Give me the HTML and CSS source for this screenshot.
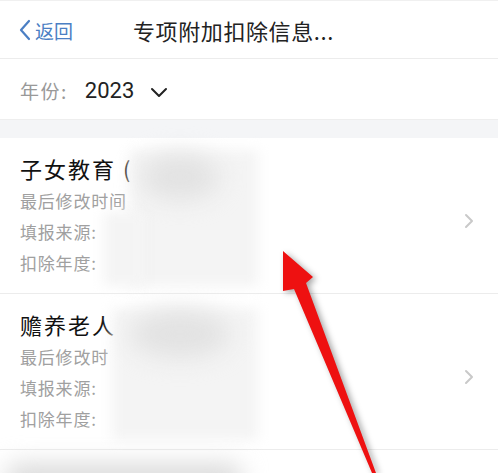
FILE: index.html
```html
<!DOCTYPE html>
<html lang="zh-CN">
  <head>
    <meta charset="UTF-8" />
    <meta name="viewport" content="width=device-width, initial-scale=1.0" />
    <title>专项附加扣除信息</title>
    <link rel="stylesheet" href="styles.css">
  </head>
  <body>
    <div class="page">
      <header class="nav-bar flex align-center">
        <a class="back flex align-center" href="#">
          <svg width="14" height="22" viewBox="0 0 14 22">
            <path d="M11 2 L3 11 L11 20" fill="none" stroke="#4b7fc4" stroke-width="2.2" stroke-linecap="round" stroke-linejoin="round" />
          </svg>
          <span>返回</span>
        </a>
        <h1 class="nav-title">专项附加扣除信息...</h1>
      </header>

      <section class="year-row flex align-center">
        <span class="year-label">年份:</span>
        <span class="year-value">2023</span>
        <svg class="year-caret" width="18" height="12" viewBox="0 0 18 12">
          <path d="M2 3 L9 10 L16 3" fill="none" stroke="#222" stroke-width="2" stroke-linecap="round" stroke-linejoin="round" />
        </svg>
      </section>

      <ul class="items">
        <li class="item flex align-center">
          <div class="item-body">
            <p class="item-title">子女教育 (</p>
            <p class="item-line">最后修改时间</p>
            <p class="item-line">填报来源:</p>
            <p class="item-line">扣除年度:</p>
          </div>
          <svg class="item-arrow" width="10" height="16" viewBox="0 0 10 16">
            <path d="M2 2 L8 8 L2 14" fill="none" stroke="#c9c9c9" stroke-width="2" stroke-linecap="round" stroke-linejoin="round" />
          </svg>
          <div class="mask mask-light mask-a1"></div>
          <div class="mask mask-light mask-a3"></div>
          <div class="mask mask-dark mask-a2"></div>
        </li>
        <li class="item flex align-center">
          <div class="item-body">
            <p class="item-title">赡养老人</p>
            <p class="item-line">最后修改时</p>
            <p class="item-line">填报来源:</p>
            <p class="item-line">扣除年度:</p>
          </div>
          <svg class="item-arrow" width="10" height="16" viewBox="0 0 10 16">
            <path d="M2 2 L8 8 L2 14" fill="none" stroke="#c9c9c9" stroke-width="2" stroke-linecap="round" stroke-linejoin="round" />
          </svg>
          <div class="mask mask-light mask-b1"></div>
          <div class="mask mask-dark mask-b2"></div>
        </li>
        <li class="item item-next">
          <div class="mask mask-dark mask-c1"></div>
        </li>
      </ul>

      <svg class="pointer" width="498" height="473" viewBox="0 0 498 473">
        <polygon points="283,251 313,277 306,283 376,473 372,473 294,289 283,291" fill="#ee1111" />
      </svg>
    </div>
  </body>
</html>
```

FILE: styles.css
```css
* {
  box-sizing: border-box;
}

body {
  margin: 0;
  font-family: "Noto Sans CJK SC", "Noto Sans", sans-serif;
  color: #222;
  background-color: #f4f5f7;
}

p,
ul,
h1 {
  margin: 0;
  padding: 0;
}

.flex {
  display: flex;
}

.align-center {
  align-items: center;
}

.page {
  position: relative;
  width: 498px;
  height: 473px;
  overflow: hidden;
}

/* top navigation */
.nav-bar {
  height: 59px;
  padding: 1px 0 0 18px;
  background-color: #fff;
  border-top: 1px solid #f0f0f0;
  border-bottom: 1px solid #ececec;
}

.back {
  gap: 3px;
  width: 115px;
  color: #4b7fc4;
  font-size: 19px;
  text-decoration: none;
}

.nav-title {
  font-size: 22px;
  font-weight: 400;
  letter-spacing: 0.6px;
  color: #222;
}

/* year selector */
.year-row {
  height: 61px;
  padding: 3px 0 0 20px;
  background-color: #fff;
  border-bottom: 1px solid #eeeeee;
}

.year-label {
  font-size: 19px;
  color: #999;
  letter-spacing: 1.5px;
}

.year-value {
  margin-left: 17px;
  font-family: "Roboto", "Noto Sans", sans-serif;
  font-size: 22px;
  color: #222;
}

.year-caret {
  margin: 2px 0 0 16px;
}

/* list */
.items {
  list-style: none;
  margin-top: 18px;
  background-color: #fff;
}

.item {
  position: relative;
  justify-content: space-between;
  height: 156px;
  padding: 16px 24px 0 20px;
  border-bottom: 1px solid #ececec;
}

.item-body {
  align-self: flex-start;
}

.item-title {
  font-size: 22px;
  line-height: 28px;
  letter-spacing: 2px;
  margin-bottom: 3px;
  color: #111;
}

.item-line {
  font-size: 17px;
  line-height: 31px;
  letter-spacing: 0.8px;
  color: #a0a0a0;
}

.item-arrow {
  margin-top: -6px;
}

.item-next {
  height: 40px;
  border-bottom: none;
}

/* blurred private values */
.mask {
  position: absolute;
}

.mask-light {
  background-color: #f4f4f4;
  filter: blur(6px);
}

.mask-dark {
  background-color: #e2e2e2;
  border-radius: 50%;
  filter: blur(12px);
}

.mask-a1 {
  left: 130px;
  top: 12px;
  width: 128px;
  height: 136px;
}

.mask-a3 {
  left: 104px;
  top: 74px;
  width: 40px;
  height: 74px;
}

.mask-a2 {
  left: 140px;
  top: 16px;
  width: 80px;
  height: 46px;
}

.mask-b1 {
  left: 112px;
  top: 14px;
  width: 146px;
  height: 132px;
}

.mask-b2 {
  left: 130px;
  top: 16px;
  width: 100px;
  height: 48px;
}

.mask-c1 {
  left: 6px;
  top: 14px;
  width: 236px;
  height: 30px;
  border-radius: 12px;
  background-color: #d9d9d9;
}

/* annotation arrow on top of the screenshot */
.pointer {
  position: absolute;
  left: 0;
  top: 0;
  filter: drop-shadow(3px 2px 3px rgba(0, 0, 0, 0.35));
}
```
